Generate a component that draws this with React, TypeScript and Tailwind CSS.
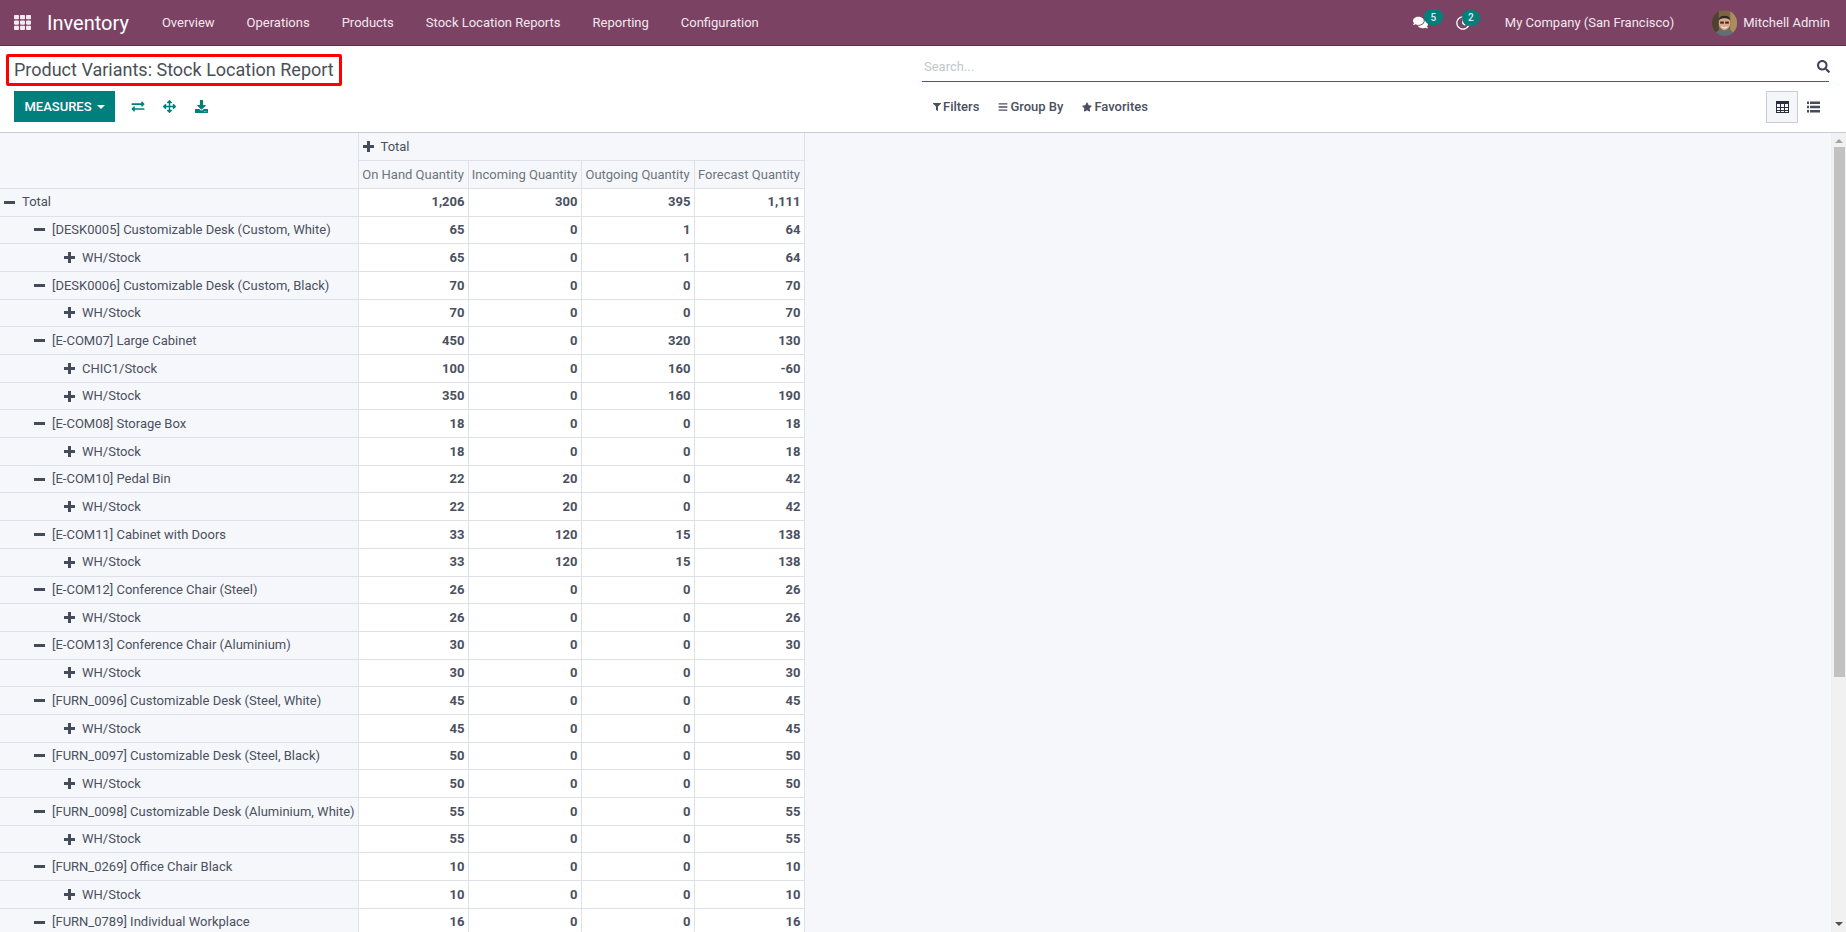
import {
  FaArrowsAlt,
  FaBars,
  FaComments,
  FaDownload,
  FaExchangeAlt,
  FaFilter,
  FaRegClock,
  FaSearch,
  FaStar,
  FaTh,
} from "react-icons/fa";

type Row = {
  label: string;
  level: number;
  open: boolean;
  values: string[];
};

const menu = [
  "Overview",
  "Operations",
  "Products",
  "Stock Location Reports",
  "Reporting",
  "Configuration",
];

const measures = [
  "On Hand Quantity",
  "Incoming Quantity",
  "Outgoing Quantity",
  "Forecast Quantity",
];

const product = (label: string, v: string[]): Row => ({
  label,
  level: 1,
  open: true,
  values: v,
});
const stock = (v: string[], label = "WH/Stock"): Row => ({
  label,
  level: 2,
  open: false,
  values: v,
});

const rows: Row[] = [
  { label: "Total", level: 0, open: true, values: ["1,206", "300", "395", "1,111"] },
  product("[DESK0005] Customizable Desk (Custom, White)", ["65", "0", "1", "64"]),
  stock(["65", "0", "1", "64"]),
  product("[DESK0006] Customizable Desk (Custom, Black)", ["70", "0", "0", "70"]),
  stock(["70", "0", "0", "70"]),
  product("[E-COM07] Large Cabinet", ["450", "0", "320", "130"]),
  stock(["100", "0", "160", "-60"], "CHIC1/Stock"),
  stock(["350", "0", "160", "190"]),
  product("[E-COM08] Storage Box", ["18", "0", "0", "18"]),
  stock(["18", "0", "0", "18"]),
  product("[E-COM10] Pedal Bin", ["22", "20", "0", "42"]),
  stock(["22", "20", "0", "42"]),
  product("[E-COM11] Cabinet with Doors", ["33", "120", "15", "138"]),
  stock(["33", "120", "15", "138"]),
  product("[E-COM12] Conference Chair (Steel)", ["26", "0", "0", "26"]),
  stock(["26", "0", "0", "26"]),
  product("[E-COM13] Conference Chair (Aluminium)", ["30", "0", "0", "30"]),
  stock(["30", "0", "0", "30"]),
  product("[FURN_0096] Customizable Desk (Steel, White)", ["45", "0", "0", "45"]),
  stock(["45", "0", "0", "45"]),
  product("[FURN_0097] Customizable Desk (Steel, Black)", ["50", "0", "0", "50"]),
  stock(["50", "0", "0", "50"]),
  product("[FURN_0098] Customizable Desk (Aluminium, White)", ["55", "0", "0", "55"]),
  stock(["55", "0", "0", "55"]),
  product("[FURN_0269] Office Chair Black", ["10", "0", "0", "10"]),
  stock(["10", "0", "0", "10"]),
  product("[FURN_0789] Individual Workplace", ["16", "0", "0", "16"]),
];

function PlusIcon() {
  return (
    <svg viewBox="0 0 11 11" className="w-[11px] h-[11px] shrink-0 fill-[#444b5a]">
      <rect x="0" y="4" width="11" height="3" />
      <rect x="4" y="0" width="3" height="11" />
    </svg>
  );
}

function MinusIcon() {
  return (
    <svg viewBox="0 0 11 11" className="w-[11px] h-[11px] shrink-0 fill-[#444b5a]">
      <rect x="0" y="4" width="11" height="3" />
    </svg>
  );
}

function TableIcon() {
  return (
    <svg viewBox="0 0 13 12" className="w-[13px] h-[12px] fill-[#2a2f3f]">
      <rect x="0" y="0" width="13" height="3" />
      <rect x="0" y="0" width="1" height="12" />
      <rect x="4" y="0" width="1" height="12" />
      <rect x="8" y="0" width="1" height="12" />
      <rect x="12" y="0" width="1" height="12" />
      <rect x="0" y="6" width="13" height="1" />
      <rect x="0" y="9" width="13" height="1" />
      <rect x="0" y="11" width="13" height="1" />
    </svg>
  );
}

function ListIcon() {
  return (
    <svg viewBox="0 0 13 12" className="ml-[9px] w-[13px] h-[12px] fill-[#444b5a]">
      <rect x="0" y="0.5" width="2" height="2.5" />
      <rect x="0" y="4.75" width="2" height="2.5" />
      <rect x="0" y="9" width="2" height="2.5" />
      <rect x="3" y="0.5" width="10" height="2.5" />
      <rect x="3" y="4.75" width="10" height="2.5" />
      <rect x="3" y="9" width="10" height="2.5" />
    </svg>
  );
}

function Avatar() {
  return (
    <svg viewBox="0 0 26 26" className="w-[25px] h-[26px] rounded-full">
      <rect width="26" height="26" fill="#7d6443" />
      <rect x="0" y="0" width="7" height="26" fill="#4f4030" />
      <rect x="19" y="0" width="7" height="26" fill="#a98d5f" />
      <ellipse cx="13" cy="26" rx="10" ry="7" fill="#5f6f73" />
      <ellipse cx="13" cy="13" rx="6" ry="7.5" fill="#d9a98a" />
      <path d="M7 10 C7 4 19 4 19 10 C16 7.5 10 7.5 7 10 Z" fill="#2f2723" />
      <rect x="8.5" y="11.5" width="3.8" height="2.2" fill="#3a2f2a" />
      <rect x="13.7" y="11.5" width="3.8" height="2.2" fill="#3a2f2a" />
      <path d="M10 17 Q13 19.5 16 17" stroke="#fff" strokeWidth="1" fill="none" />
    </svg>
  );
}

function Navbar() {
  return (
    <nav className="h-[46px] shrink-0 flex items-center bg-[#7c4264] border-b border-[#5e2f4b] text-white">
      <FaTh className="ml-[14px] w-[17px] h-[17px] text-[#f3e9f0]" />
      <span className="ml-[16px] text-[20px]">Inventory</span>
      <div className="ml-[33px] flex items-center gap-[32px] text-[13px] text-[#f1e8ee]">
        {menu.map((item) => (
          <span key={item}>{item}</span>
        ))}
      </div>
      <div className="ml-auto flex items-center text-[13px] text-[#f1e8ee]">
        <span className="relative mr-[28px]">
          <FaComments className="w-[15px] h-[15px] text-white" />
          <span className="absolute -top-[6px] left-[11px] w-[19px] h-[16px] rounded-full bg-[#00807d] text-[10px] font-medium flex items-center justify-center">
            5
          </span>
        </span>
        <span className="relative mr-[35px]">
          <FaRegClock className="w-[14px] h-[14px] text-white" />
          <span className="absolute -top-[6px] left-[6px] w-[18px] h-[16px] rounded-full bg-[#00807d] text-[10px] font-medium flex items-center justify-center">
            2
          </span>
        </span>
        <span>My Company (San Francisco)</span>
        <span className="ml-[38px] mr-[6px]">
          <Avatar />
        </span>
        <span className="mr-[16px]">Mitchell Admin</span>
      </div>
    </nav>
  );
}

function ControlPanel() {
  return (
    <div className="h-[87px] shrink-0 flex bg-white border-b border-[#c9ccd6] text-[#4a5060]">
      <div className="w-[922px] shrink-0 pl-[6px]">
        <div className="mt-[8px] w-[336px] h-[32px] flex items-center border-[3px] border-[#ff0000] rounded-[2px] pl-[5px] pb-[2px]">
          <span className="text-[18px] text-[#495057] whitespace-nowrap">
            Product Variants: Stock Location Report
          </span>
        </div>
        <div className="mt-[5px] ml-[8px] flex items-center">
          <button className="w-[101px] h-[31px] bg-[#00807d] text-white text-[13px] font-medium flex items-center justify-center gap-[5px]">
            MEASURES
            <span className="w-0 h-0 border-x-[4px] border-x-transparent border-t-[4px] border-t-white" />
          </button>
          <FaExchangeAlt className="ml-[16px] w-[14px] h-[13px] text-[#00807d]" />
          <FaArrowsAlt className="ml-[18px] w-[13px] h-[13px] text-[#00807d]" />
          <FaDownload className="ml-[19px] w-[13px] h-[13px] text-[#00807d]" />
        </div>
      </div>
      <div className="w-[907px] shrink-0">
        <div className="mt-[4px] h-[32px] flex items-center justify-between border-b border-[#00807d] pl-[2px] pt-[2px]">
          <span className="text-[13px] text-[#c3c6cc]">Search...</span>
          <FaSearch className="-mr-[1px] w-[13px] h-[13px] text-[#3f4658]" />
        </div>
        <div className="mt-[9px] h-[32px] flex items-center text-[13px] font-medium">
          <FaFilter className="ml-[11px] w-[8px] h-[8px]" />
          <span className="ml-[2px]">Filters</span>
          <FaBars className="ml-[19px] w-[10px] h-[10px]" />
          <span className="ml-[2px]">Group By</span>
          <FaStar className="ml-[19px] w-[10px] h-[10px]" />
          <span className="ml-[2px]">Favorites</span>
          <div className="ml-auto mr-[9px] flex items-center">
            <span className="w-[32px] h-[32px] flex items-center justify-center bg-[#f5f6fa] border border-[#c9ccd6]">
              <TableIcon />
            </span>
            <ListIcon />
          </div>
        </div>
      </div>
    </div>
  );
}

function PivotTable() {
  return (
    <table className="table-fixed border-collapse w-[804px] text-[13px] text-[#4a5060]">
      <colgroup>
        <col className="w-[358px]" />
        <col className="w-[110px]" />
        <col className="w-[113px]" />
        <col className="w-[113px]" />
        <col className="w-[110px]" />
      </colgroup>
      <thead>
        <tr className="h-[27.7px]">
          <th rowSpan={2} className="border-r border-b border-[#dfe1e8]" />
          <th colSpan={4} className="border border-t-0 border-[#dfe1e8] text-left font-normal pl-[4px]">
            <span className="flex items-center gap-[7px]">
              <PlusIcon />
              Total
            </span>
          </th>
        </tr>
        <tr className="h-[27.7px]">
          {measures.map((m) => (
            <th
              key={m}
              className="border border-[#dfe1e8] font-normal text-[#6c757d] text-center whitespace-nowrap px-0"
            >
              {m}
            </th>
          ))}
        </tr>
      </thead>
      <tbody>
        {rows.map((row, i) => (
          <tr key={i} className="h-[27.7px]">
            <td className="border-r border-b border-[#dfe1e8] whitespace-nowrap">
              <span
                className={
                  row.level === 0
                    ? "flex items-center pl-[4px] gap-[7px]"
                    : row.level === 1
                      ? "flex items-center pl-[34px] gap-[7px]"
                      : "flex items-center pl-[64px] gap-[7px]"
                }
              >
                {row.open ? <MinusIcon /> : <PlusIcon />}
                {row.label}
              </span>
            </td>
            {row.values.map((v, j) => (
              <td
                key={j}
                className="border border-[#dfe1e8] bg-white text-right font-bold pr-[3px]"
              >
                {v}
              </td>
            ))}
          </tr>
        ))}
      </tbody>
    </table>
  );
}

function Scrollbar() {
  return (
    <div className="w-[15px] shrink-0 flex flex-col items-center bg-[#f1f1f1] border-l border-[#eeeeee]">
      <span className="mt-[6px] w-0 h-0 border-x-[4px] border-x-transparent border-b-[4px] border-b-[#a3a3a3]" />
      <span className="mt-[4px] w-[11px] h-[530px] bg-[#c1c1c1]" />
      <span className="mt-auto mb-[6px] w-0 h-0 border-x-[4px] border-x-transparent border-t-[4px] border-t-[#505050]" />
    </div>
  );
}

export default function App() {
  return (
    <div className="h-screen overflow-hidden flex flex-col font-[Roboto,sans-serif] bg-[#f6f7fb]">
      <Navbar />
      <ControlPanel />
      <div className="flex-1 min-h-0 flex">
        <div className="flex-1 min-w-0 overflow-hidden">
          <PivotTable />
        </div>
        <Scrollbar />
      </div>
    </div>
  );
}
